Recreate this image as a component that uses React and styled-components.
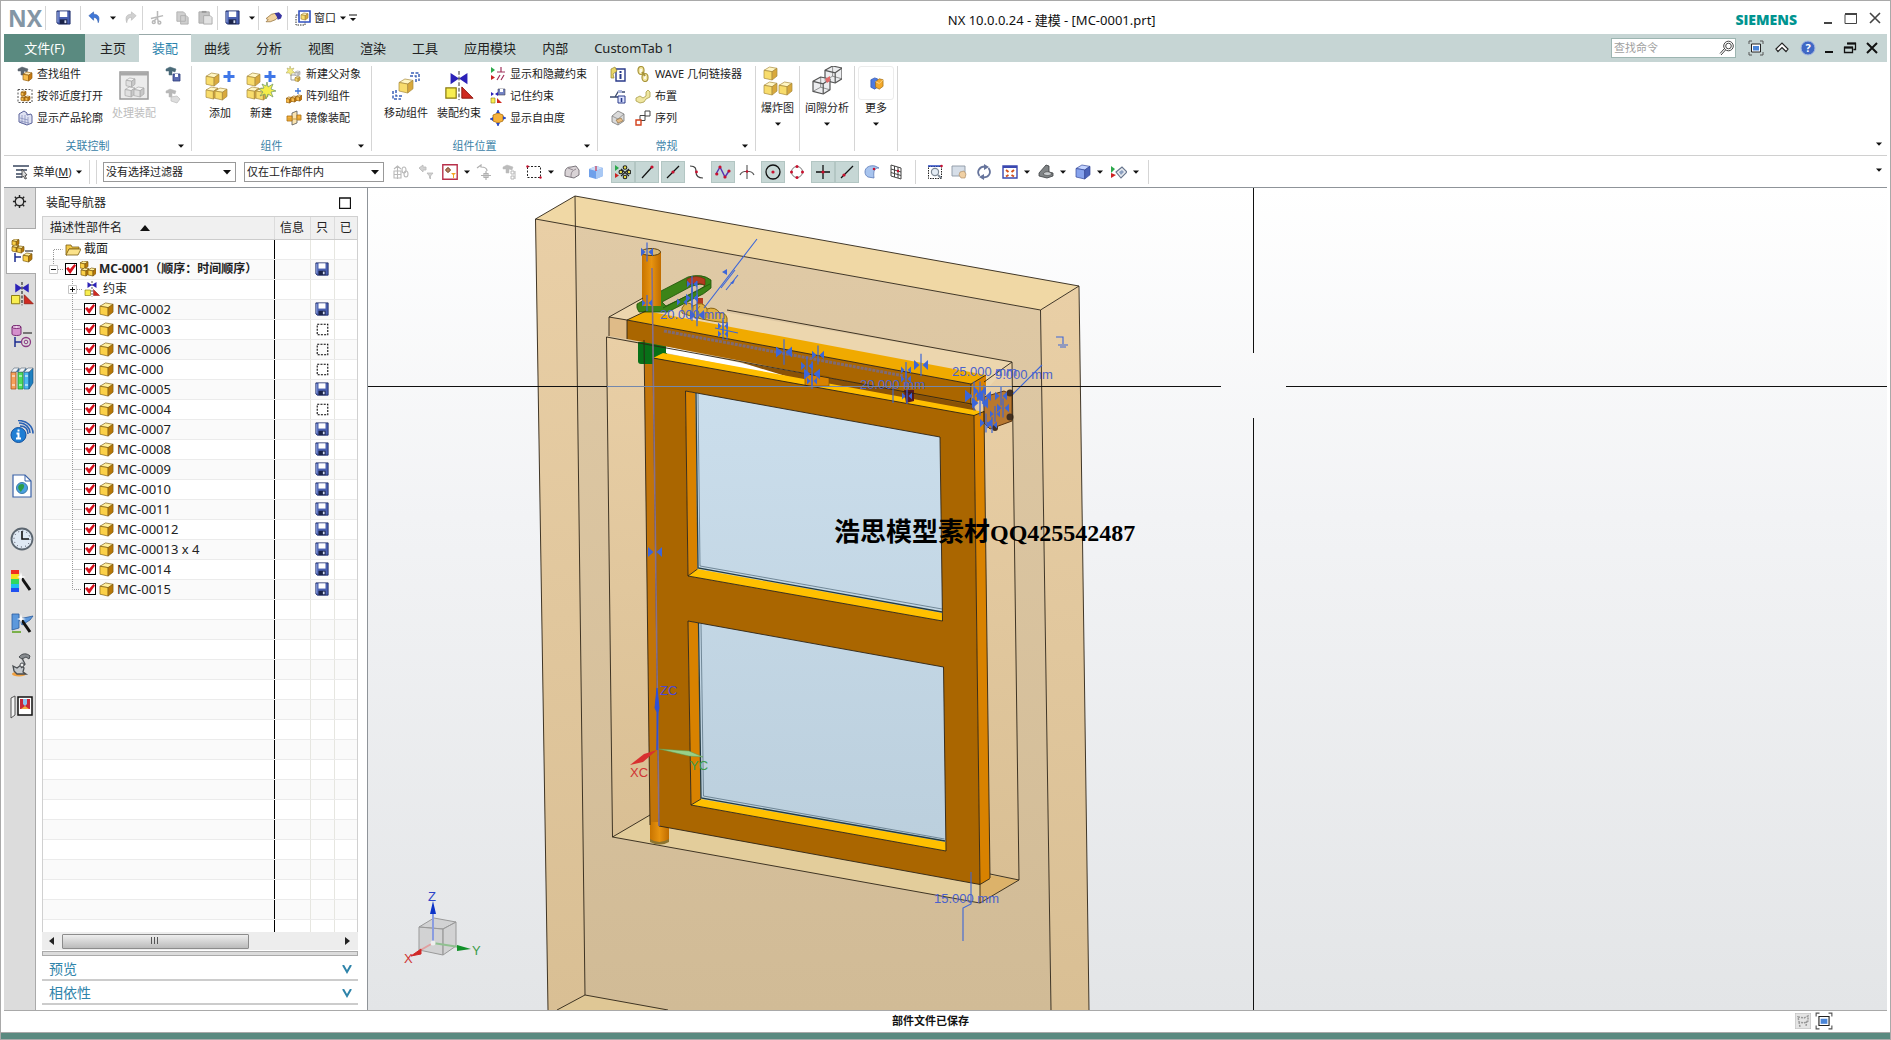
import React, { useState } from "react";
import styled, { createGlobalStyle, css } from "styled-components";

const GlobalStyle = createGlobalStyle`
  * { box-sizing: border-box; }
  body {
    margin: 0;
    background: #fff;
    color: #222;
    font-family: "Noto Sans", "Noto Sans CJK SC", sans-serif;
    font-size: 11px;
    line-height: 16px;
  }
  button, input, select { font: inherit; color: inherit; }
  button { padding: 0; border: 0; background: none; }
  svg { display: block; flex: none; }
`;

const StyledWindow = styled.div`
  display: flex;
  flex-direction: column;
  height: 100vh;
  padding: 0 3px;
  border: 1px solid #a9a9a9;
  border-bottom: 0;
`;

const StyledTitleBar = styled.header`
  display: flex;
  align-items: center;
  height: 33px;
  flex: none;
`;

const StyledLogo = styled.span`
  width: 41px;
  padding-left: 4px;
  color: #8496a5;
  font: bold 23px/30px "Open Sans", sans-serif;
`;

const StyledIconButton = styled.button`
  display: flex;
  align-items: center;
  justify-content: center;
  flex: none;
  width: ${(p) => p.$w || 24}px;
  height: 22px;
  margin-left: ${(p) => p.$before || 0}px;
  ${(p) =>
    p.$on &&
    css`
      background: #c6d7d5;
      border: 1px solid #b3c6c3;
    `}
`;

const StyledSeparator = styled.span`
  width: 1px;
  height: ${(p) => p.$h || 24}px;
  margin: 0 ${(p) => p.$gap || 0}px;
  background: #d5d5d5;
  flex: none;
`;

const StyledWindowTitle = styled.h1`
  flex: 1;
  margin: 0;
  padding: 4px 0 0 8px;
  text-align: center;
  font-size: 13px;
  font-weight: normal;
  line-height: 18px;
  color: #111;
`;

const StyledBrand = styled.span`
  padding-top: 4px;
  margin-right: 20px;
  color: #009490;
  font: 800 14px/18px "Open Sans", sans-serif;
`;

const StyledTabBar = styled.nav`
  display: flex;
  align-items: stretch;
  height: 28px;
  flex: none;
  background: #c6d5d4;
`;

const StyledTab = styled.button`
  padding: 0 13px 2px;
  font-size: 13px;
  line-height: 20px;
  color: ${(p) => (p.$active ? "#2b83ad" : "#222")};
  background: ${(p) => (p.$active ? "#fff" : "transparent")};
  border-top: 1px solid ${(p) => (p.$active ? "#9aa" : "transparent")};
`;

const StyledFileTab = styled(StyledTab)`
  width: 81px;
  margin-right: 2px;
  color: #fff;
  background: #5a8a80;
`;

const StyledTabTools = styled.div`
  display: flex;
  align-items: center;
  margin-left: auto;
  padding-right: 5px;
`;

const StyledSearch = styled.label`
  display: flex;
  align-items: center;
  width: 125px;
  height: 20px;
  margin-right: 8px;
  background: #fff;
  border: 1px solid #9db5b1;

  input {
    flex: 1;
    min-width: 0;
    padding: 0 2px;
    border: 0;
    outline: 0;
    background: none;
  }
  input::placeholder { color: #a0a0a0; }
`;

const StyledRibbon = styled.section`
  display: flex;
  height: 94px;
  flex: none;
  padding: 4px 0;
  border-bottom: 1px solid #d0d0d0;
`;

const StyledGroup = styled.div`
  display: flex;
  flex-direction: column;
  justify-content: space-between;
  width: ${(p) => p.$w}px;
  height: 85px;
  border-right: 1px solid #d5d5d5;
`;

const StyledGroupBody = styled.div`
  display: flex;
  gap: 9px;
  padding-left: ${(p) => p.$pad}px;
  justify-content: ${(p) => (p.$pad ? "flex-start" : "center")};
`;

const StyledGroupLabel = styled.div`
  display: grid;
  grid-template-columns: 1fr 20px;
  align-items: center;
  justify-items: center;
  height: 16px;
  margin-bottom: -3px;
  color: #3a82a8;
`;

const StyledList = styled.div`
  display: flex;
  flex-direction: column;
  margin-top: -3px;
`;

const StyledListButton = styled.button`
  display: flex;
  align-items: center;
  gap: 4px;
  height: 22px;
  white-space: nowrap;
`;

const StyledBigButton = styled.button`
  display: flex;
  flex-direction: column;
  align-items: center;
  min-width: 32px;
  white-space: nowrap;
  color: ${(p) => (p.$off ? "#bdbdbd" : "#222")};

  > svg:first-child { margin: 0 0 4px; }
  > svg:last-child { margin-top: 5px; }
`;

const StyledMoreBox = styled.span`
  display: flex;
  align-items: center;
  justify-content: center;
  width: 36px;
  height: 34px;
  border: 1px solid #ececec;
  border-radius: 3px;
`;

const StyledCorner = styled.div`
  display: flex;
  align-items: flex-end;
  margin-left: auto;
  padding: 0 5px 4px 0;
`;

const StyledToolbar = styled.section`
  display: flex;
  align-items: center;
  height: 32px;
  flex: none;
  border-bottom: 1px solid #8f9499;
`;

const StyledMenuButton = styled.button`
  display: flex;
  align-items: center;
  gap: 4px;
  width: 76px;
  margin-left: 9px;
`;

const StyledSelectBox = styled.label`
  display: grid;
  align-items: center;
  width: ${(p) => p.$w}px;
  margin-right: ${(p) => p.$after}px;

  > * { grid-area: 1 / 1; }
  svg { justify-self: end; margin-right: 5px; pointer-events: none; }
  select {
    appearance: none;
    width: 100%;
    height: 20px;
    padding: 0 2px;
    border: 1px solid #999;
    border-radius: 0;
    background: #fff;
  }
`;

const StyledMain = styled.main`
  display: flex;
  flex: 1;
  min-height: 0;
`;

const StyledSideBar = styled.nav`
  display: flex;
  flex-direction: column;
  align-items: flex-end;
  width: 32px;
  background: #dcdcdc;
  border-right: 1px solid #aaa;
`;

const StyledSideButton = styled.button`
  display: flex;
  align-items: center;
  justify-content: center;
  width: ${(p) => p.$w || 29}px;
  height: ${(p) => p.$h || 42}px;
  margin: 0 -1px ${(p) => p.$after || 0}px 0;
  ${(p) =>
    p.$active &&
    css`
      width: 30px;
      background: #fff;
      border: 1px solid #aaa;
      border-right: 0;
    `}
`;

const StyledPanel = styled.aside`
  display: flex;
  flex-direction: column;
  width: 332px;
  padding: 0 9px 5px 6px;
  border-right: 1px solid #8f9499;
`;

const StyledPanelHead = styled.div`
  display: flex;
  align-items: center;
  justify-content: space-between;
  height: 28px;
  padding: 2px 7px 0 4px;
  font-size: 12px;
`;

const StyledTreeFrame = styled.div`
  flex: 1;
  min-height: 0;
  overflow: hidden;
  border: 1px solid #d0d0d0;
  border-bottom: 0;
`;

const StyledTree = styled.table`
  width: 100%;
  table-layout: fixed;
  border-collapse: collapse;
  font-size: 12px;

  th {
    height: 22px;
    padding: 0;
    font-weight: normal;
    background: #f0f0f0;
    border-right: 1px solid #dcdcdc;
    border-bottom: 1px solid #ccc;
  }
  th:first-child { text-align: left; padding-left: 7px; }
  th svg { display: inline-block; margin-left: 18px; vertical-align: 1px; }
  td {
    height: 20px;
    padding: 0;
    border-right: 1px solid #e6e6e0;
    border-bottom: 1px solid #ebebeb;
  }
  td:first-child { border-right: 1px solid #000; }
  td:last-child, th:last-child { border-right: 0; }
  td > svg { margin: 0 auto; }
  tr:nth-child(even) td { background: #fafafa; }
`;

const StyledNode = styled.label`
  display: flex;
  align-items: center;
  height: 19px;
  padding-left: ${(p) => p.$indent}px;
  font-size: ${(p) => (p.$part ? 13 : 12)}px;
  font-weight: ${(p) => (p.$bold ? "bold" : "normal")};
  white-space: nowrap;

  span { padding-left: 3px; }
`;

const StyledCheck = styled.input`
  appearance: none;
  display: grid;
  flex: none;
  width: 12px;
  height: 12px;
  margin: 0 3px 0 0;
  border: 1px solid #000;
  background: #fff;

  &:checked::before {
    content: "";
    background: #d8101c;
    clip-path: polygon(0 45%, 22% 30%, 40% 50%, 85% 0, 100% 15%, 42% 100%);
  }
`;

const StyledScroll = styled.div`
  display: flex;
  align-items: center;
  height: 18px;
  flex: none;
  padding: 0 8px 0 7px;
  background: #ededed;
`;

const StyledThumb = styled.div`
  display: flex;
  align-items: center;
  justify-content: center;
  width: 62%;
  height: 15px;
  margin: 0 auto 0 8px;
  border: 1px solid #8c8c8c;
  border-radius: 1px;
  background: linear-gradient(#eee, #bbb);
`;

const StyledSplitter = styled.div`
  height: 5px;
  flex: none;
  margin: 1px 0;
  background: #dcdcdc;
  border: 1px solid #aaa;
`;

const StyledFold = styled.button`
  display: flex;
  align-items: center;
  justify-content: space-between;
  height: 24px;
  flex: none;
  padding: 2px 6px 0 7px;
  border-bottom: 2px solid #ccc;
  font-size: 14px;
  color: #2f84aa;
`;

const StyledViewport = styled.section`
  flex: 1;
  min-width: 0;
  overflow: hidden;
  background: linear-gradient(#fff, #f2f3f5 40%, #e3e5e7);

  svg { width: 100%; height: 100%; }
`;

const StyledStatus = styled.footer`
  display: flex;
  align-items: center;
  gap: 4px;
  height: 22px;
  flex: none;
  padding: 0 54px 2px 66px;
  border-top: 1px solid #a9a9a9;

  strong { flex: 1; text-align: center; color: #111; }
`;

const StyledBottomEdge = styled.div`
  height: 8px;
  flex: none;
  margin: 0 -3px;
  border-top: 1px solid #a9a9a9;
  border-bottom: 1px solid #a9a9a9;
  background: #5a8a80;
`;

/* ---------- icon drawings ---------- */

const Svg = ({ s = 16, v = 16, children }) => (
  <svg width={s} height={s} viewBox={`0 0 ${v} ${v}`} fill="none" aria-hidden="true">
    {children}
  </svg>
);

const YELLOW = ["#fff6c4", "#f8dc6c", "#d9a93c", "#a8893c"];
const GOLD = ["#fff0a0", "#fbd048", "#b87808", "#7d5a10"];
const GREY = ["#f4f4f4", "#e0e0e0", "#c8c8c8", "#a8a8a8"];
const BLUE = ["#c4d4ff", "#86a2ec", "#4b63b8", "#34489a"];
const ORANGE = ["#ffe8b0", "#f7bc4c", "#c97a10", "#96600f"];

const Cube = ({ x = 0, y = 0, s = 10, c = YELLOW }) => {
  const pt = (a, b) => `${(x + a * s).toFixed(1)} ${(y + b * s).toFixed(1)}`;
  return (
    <g stroke={c[3]} strokeWidth="0.7" strokeLinejoin="round">
      <path d={`M${pt(0, 0.25)}L${pt(0.42, 0)}L${pt(1, 0.1)}L${pt(0.62, 0.36)}z`} fill={c[0]} />
      <path d={`M${pt(0, 0.25)}L${pt(0.62, 0.36)}L${pt(0.62, 1)}L${pt(0, 0.86)}z`} fill={c[1]} />
      <path d={`M${pt(0.62, 0.36)}L${pt(1, 0.1)}L${pt(1, 0.7)}L${pt(0.62, 1)}z`} fill={c[2]} />
    </g>
  );
};

const Wire = ({ x, y, s }) => {
  const pt = (a, b) => `${(x + a * s).toFixed(1)} ${(y + b * s).toFixed(1)}`;
  return (
    <g stroke="#555" strokeWidth="1.2" strokeLinejoin="round">
      <path
        d={`M${pt(0, 0.25)}L${pt(0.45, 0)}L${pt(1, 0.12)}L${pt(1, 0.75)}L${pt(0.6, 1)}L${pt(0, 0.85)}z`}
        fill="#e4e6e8"
        fillOpacity="0.7"
      />
      <path d={`M${pt(0, 0.25)}L${pt(0.6, 0.4)}L${pt(1, 0.12)}M${pt(0.6, 0.4)}L${pt(0.6, 1)}`} />
      <path d={`M${pt(0, 0.85)}L${pt(0.45, 0.6)}L${pt(1, 0.75)}M${pt(0.45, 0.6)}L${pt(0.45, 0)}`} strokeWidth="0.6" />
    </g>
  );
};

const Dot = ({ x, y, r = 1.6 }) => <circle cx={x} cy={y} r={r} fill="#c8102e" />;

const Binocular = ({ c = "#5c6670" }) => (
  <path d="M1 3l4-2 6 2-1 3-3-1v4H4V5L1 5z" fill={c} stroke={c} strokeWidth="0.5" />
);

const Disk = ({ s = 14 }) => (
  <Svg s={s}>
    <path d="M1 1h14v14H2.500L1 13.500z" fill="#4a60b0" stroke="#1e2c68" />
    <path d="M4 1.500h8v6H4z" fill="#fff" />
    <path d="M4 10h8v5H4z" fill="#1a2348" />
    <path d="M9 11h2v3H9z" fill="#d4dcf4" />
    <path d="M2 2v11" stroke="#9db0ea" />
  </Svg>
);

const Arrow = ({ s = 6 }) => (
  <svg width={s} height={s} viewBox="0 0 6 6" aria-hidden="true">
    <path d="M0 1.500h6L3 4.800z" fill="#111" />
  </svg>
);

const Mate = ({ thin }) => (
  <>
    <path d="M7 2l9 6-9 6zM25 2l-9 6 9 6z" fill="#2c22b8" />
    <path d="M16 0v31" stroke="#222" strokeWidth={thin ? 1.5 : 1} strokeDasharray="4 2" />
    <path d="M2 18h11v11H2z" fill="#f8ee50" stroke="#8a7a10" strokeWidth="1.300" />
    <path d="M19 17v12h12z" fill="#cf2a20" stroke="#8c150e" />
  </>
);

const icons = {
  undo: <path d="M2 6l5-4v2.500c5 0 7 3 5 9-.8-4-2-5.500-5-5.500v3z" fill="#3f77d8" stroke="#2354a8" strokeWidth="0.600" />,
  redo: <path d="M14 6L9 2v2.500c-5 0-7 3-5 9 .8-4 2-5.500 5-5.500v3z" fill="#d0d0d0" stroke="#b0b0b0" strokeWidth="0.600" />,
  cut: (
    <g stroke="#b8b8b8" strokeWidth="1.600">
      <path d="M8 1v8M1 9l13-3M7 9l-3 3M8 9l1 4" />
      <circle cx="4" cy="13" r="1.500" />
      <circle cx="10" cy="13.500" r="1.500" />
    </g>
  ),
  copy: <path d="M2 2h7l2 2v8H2zM6 6h6l2 2v7H6z" fill="#cfcfcf" stroke="#b0b0b0" />,
  paste: (
    <>
      <path d="M1 2h11v12H1z" fill="#c4c4c4" stroke="#aaa" />
      <path d="M4 1h5v2H4z" fill="#999" />
      <path d="M6 6h7l2 2v7H6z" fill="#e2e2e2" stroke="#aaa" />
    </>
  ),
  hand: (
    <>
      <path d="M1 9l5-4 4-1 3 3-3 3-5 2-4 0 2-2z" fill="#f2d3a0" stroke="#91703c" strokeWidth="0.700" />
      <path d="M9 4l4-1 3 3-1 3-3 1-1-3z" fill="#3934a0" />
    </>
  ),
  windows: (
    <>
      <path d="M1 5h9v10H1z" stroke="#333" strokeDasharray="1.500 1" />
      <path d="M4 1h11v11H4z" fill="#fff" stroke="#3050c0" strokeWidth="1.600" />
      <Cube x={6} y={3} s={7} />
    </>
  ),
  find: (
    <>
      <Binocular />
      <Cube x={6} y={6} s={9} c={ORANGE} />
    </>
  ),
  near: (
    <>
      <path d="M1 1.500h14v13H1z" stroke="#555" strokeDasharray="2 1.500" />
      <Cube x={4} y={3} s={5} c={ORANGE} />
      <Cube x={4} y={8} s={5} c={ORANGE} />
      <Cube x={8} y={8} s={5} c={ORANGE} />
    </>
  ),
  outline: (
    <>
      <path d="M2 4l5-3 3 2v2l4-1 1 2v7l-5 2-8-3z" fill="#dfe2f2" stroke="#5a629a" />
      <path d="M5 5v9M8 5v9M11 7v8M3 8l8 2M3 11l9 2" stroke="#8088b8" strokeWidth="0.700" />
    </>
  ),
  bSave: (
    <>
      <Binocular c="#4a6a78" />
      <path d="M8 8h7v7H8z" fill="#5a6ab0" stroke="#2c3a78" strokeWidth="0.800" />
      <path d="M10 8h3v3h-3z" fill="#fff" />
    </>
  ),
  bOff: (
    <>
      <Binocular c="#b8b8b8" />
      <path d="M6 9l6-1 3 3-3 4-6-2z" fill="#ddd" stroke="#bbb" strokeWidth="0.700" />
    </>
  ),
  parent: (
    <>
      <path d="M4 0l1 3 3-1-1.500 2.500L9 7 6 7 5 10 3.500 7 0 7l2-2.500L1 2l2.500 1z" fill="#f3ea82" stroke="#a8a25a" strokeWidth="0.500" />
      <path d="M5 9v5h5M5 9h5" stroke="#999" />
      <Cube x={9} y={5} s={5} c={GREY} />
      <Cube x={9} y={10.5} s={5} />
    </>
  ),
  array: (
    <>
      <path d="M12 0v6M9 3h6" stroke="#3f77d8" strokeWidth="1.300" />
      <Cube x={0} y={9} s={6} c={ORANGE} />
      <Cube x={5} y={8} s={6} c={ORANGE} />
      <Cube x={10} y={7} s={6} c={ORANGE} />
    </>
  ),
  mirror: (
    <>
      <path d="M6 3l5-2v12l-5 2z" fill="#fbe4b0" stroke="#555" strokeWidth="0.800" />
      <path d="M1 6h5v5H1zM11 5h4v5h-4z" fill="#f7b23c" stroke="#a86c10" strokeWidth="0.800" />
      <path d="M1 9h14" stroke="#c93" />
    </>
  ),
  showCon: (
    <>
      <path d="M1 1l4 3-4 3z" fill="#2ba84a" />
      <path d="M1 9l4 2.500L1 14z" fill="#c22" />
      <path d="M7 6h8M11 1v5M7 14l3-5M11 14l3-5" stroke="#a0305a" strokeWidth="1.200" />
    </>
  ),
  keepCon: (
    <>
      <path d="M8 1h7v6H8z" fill="#7484c4" stroke="#445" strokeWidth="0.600" />
      <path d="M10 1h3v3h-3z" fill="#fff" />
      <path d="M1 4l3 2-3 2zM8 4L5 6l3 2z" fill="#2c22b8" />
      <path d="M1 10h4v5H1z" fill="#f8ee50" stroke="#8a7a10" strokeWidth="0.600" />
      <path d="M7 10l5 5H7z" fill="#cf2a20" />
    </>
  ),
  dof: (
    <>
      <path d="M8 0v16M0 9l16-1" stroke="#2a48c0" strokeWidth="1.200" />
      <path d="M3 5l5-2 5 2v6l-5 2-5-2z" fill="#f7b23c" stroke="#a86c10" strokeWidth="0.800" />
      <path d="M8 0L6 3h4zM8 16l-2-3h4zM0 9l3-2v4zM16 8l-3-2v4z" fill="#2a48c0" />
    </>
  ),
  linkInfo: (
    <>
      <path d="M6 3h9v12H6z" fill="#fff" stroke="#2a3a8a" strokeWidth="1.400" />
      <path d="M10.500 5v2M10.500 8v5" stroke="#2a3a8a" strokeWidth="2" />
      <path d="M1 3l4-2 2 4-4 3 1 4-3 0z" fill="#ead768" stroke="#948430" strokeWidth="0.700" />
    </>
  ),
  tree: (
    <>
      <path d="M0 9h5M5 9l3-5h7M5 9h10" stroke="#3a4a70" strokeWidth="1.300" />
      <path d="M8 2h4v3H8z" fill="#aab4d8" />
      <path d="M8 8h7v7H8z" fill="#dde4ff" stroke="#2a3a8a" />
      <path d="M11.500 10v4" stroke="#2a3a8a" strokeWidth="1.600" />
    </>
  ),
  brick: (
    <>
      <path d="M2 6l6-5 6 3v7l-6 4-6-3z" fill="#dadada" stroke="#777" strokeWidth="0.800" />
      <path d="M2 6l6 3 6-5M8 9v6" stroke="#888" strokeWidth="0.800" />
      <path d="M6 10l5-2 2 3-5 2z" fill="#e6bd88" stroke="#8a6a3a" strokeWidth="0.600" />
    </>
  ),
  chain: (
    <g stroke="#a8943a" strokeWidth="1.200">
      <ellipse cx="6" cy="4.500" rx="3" ry="4" fill="#f3e6a0" />
      <ellipse cx="10" cy="11.500" rx="3" ry="4" fill="#f3e6a0" />
      <path d="M6 3v4M10 9v4" stroke="#fff" strokeWidth="1.500" />
      <path d="M7 6l3 4" strokeWidth="2" />
    </g>
  ),
  arrange: <path d="M1 10l4-2 3 2 3-2V4l2-2 2 2v5l-4 2-2 3-4 1-4-2z" fill="#efe6a0" stroke="#a89c48" strokeWidth="0.800" />,
  sequence: (
    <>
      <path d="M10 1h5v5h-5z" stroke="#444" />
      <path d="M5 5.500h5v5H5z" stroke="#444" />
      <path d="M1 10h5v5H1z" stroke="#d3401c" strokeWidth="1.400" fill="#fff" />
    </>
  ),
  more: (
    <>
      <path d="M2 4l4-2 3 1v9l-3 2-4-2z" fill="#4d7ae0" stroke="#2a50a8" strokeWidth="0.700" />
      <path d="M7 6l4-3 4 1v7l-4 3-4-2z" fill="#f3a92c" stroke="#9c6a10" strokeWidth="0.700" />
      <path d="M7 6l4 2 4-4" stroke="#ffe0a0" strokeWidth="0.800" />
    </>
  ),
  menu: (
    <>
      <path d="M0 2h16M3 6h11M3 10h8M3 13h6" stroke="#6a7486" strokeWidth="1.800" />
      <path d="M9 5l5 6-2 .5 1.500 3-1.500.5-1.500-3-1.500 1.500z" fill="#ddd" stroke="#333" strokeWidth="0.800" />
    </>
  ),
  t1: (
    <g stroke="#b9b9b9" strokeWidth="1.100">
      <path d="M1 7h7v7H1zM4.500 2v13M1 5l3.500-3L8 5M1 10.500h7" />
      <ellipse cx="11" cy="6" rx="2" ry="3" />
      <ellipse cx="13" cy="10" rx="2" ry="3" />
    </g>
  ),
  t2: <path d="M1 4l4-3v2h3v3H5v2zM9 9h6l-2.500 3v3l-1-1v-2z" fill="#d2d2d2" stroke="#b8b8b8" strokeWidth="0.800" />,
  snap: (
    <>
      <path d="M0.800 0.800h14.400v14.400H0.800z" fill="#fff" stroke="#b8304a" strokeWidth="1.400" />
      <path d="M6 3v6M3 6h6" stroke="#a0522a" />
      <circle cx="6" cy="6" r="2" stroke="#7a4a2a" />
      <path d="M9 9h5l-2 2v3h-1v-3z" fill="#f5a623" />
    </>
  ),
  t4: <path d="M1 4l4-3v2c4 0 6 1 6 4M10 7v9M5 11.500h10M8 9.500h4v4H8z" stroke="#b0b0b0" strokeWidth="1.200" />,
  t5: (
    <>
      <Binocular c="#bbb" />
      <path d="M9 7h3v3H9zM9 12h3v3H9zM13 7v8" stroke="#b8b8b8" />
    </>
  ),
  marquee: (
    <>
      <path d="M1.500 2.500h13v11h-13z" stroke="#222" strokeDasharray="2 1.500" />
      <Dot x={1.5} y={2.5} r={1.2} />
      <Dot x={14.5} y={13.5} r={1.2} />
    </>
  ),
  greyBox: (
    <>
      <path d="M1 9c0-5 3-6 6-6l5-1 3 4v5l-5 3-9-2z" fill="#d9d3d6" stroke="#6f6a70" strokeWidth="0.900" />
      <path d="M7 13c0-5 1-6 5-8M4 4l5 2" stroke="#8a8088" strokeWidth="0.900" />
    </>
  ),
  blueCube: (
    <>
      <path d="M1 5l7-3 7 2v8l-7 3-7-2z" fill="#6fa0ea" />
      <path d="M1 5l7 2 7-3-7-2z" fill="#c8dcf8" />
      <path d="M8 7v8l7-3V4z" fill="#a8c8f4" />
      <path d="M8 7V2" stroke="#c8102e" />
    </>
  ),
  dots: (
    <>
      <path d="M0 1l4 3-4 3z" fill="#2ba84a" />
      <path d="M0 9l4 2.500L0 14z" fill="#c22" />
      <g fill="#e8dc4a" stroke="#222" strokeWidth="1.100">
        <path d="M6 5l8 7M14 5l-8 7" />
        <circle cx="10" cy="3.500" r="1.800" />
        <circle cx="10" cy="13" r="1.800" />
        <circle cx="5.800" cy="8" r="1.800" />
        <circle cx="14" cy="8" r="1.800" />
      </g>
    </>
  ),
  lineEnd: (
    <>
      <path d="M3 14L13 3" stroke="#111" strokeWidth="1.200" />
      <Dot x={13} y={3} />
    </>
  ),
  lineMid: (
    <>
      <path d="M2 14L14 2" stroke="#111" strokeWidth="1.200" />
      <Dot x={8} y={8} />
    </>
  ),
  curve: (
    <>
      <path d="M1 2c6 0 6 3 6 6s1 6 7 6" stroke="#444" strokeWidth="1.200" />
      <Dot x={7.5} y={8} r={1.4} />
    </>
  ),
  poly: (
    <>
      <path d="M1 10L5 3l5 10 4-6" stroke="#5a35b0" strokeWidth="1.500" />
      <Dot x={1.8} y={10} />
      <Dot x={5} y={3} />
      <Dot x={10} y={13} />
      <Dot x={14} y={7} />
    </>
  ),
  cross: (
    <>
      <path d="M8 1v14M1 11c2-5 12-5 14 0" stroke="#555" strokeWidth="1.100" />
      <Dot x={8} y={7.5} r={1.3} />
    </>
  ),
  center: (
    <>
      <circle cx="8" cy="8" r="7" stroke="#111" strokeWidth="1.300" />
      <Dot x={8} y={8} />
    </>
  ),
  quad: (
    <>
      <circle cx="8" cy="8" r="5.500" stroke="#777" />
      <Dot x={8} y={2.5} r={1.5} />
      <Dot x={8} y={13.5} r={1.5} />
      <Dot x={2.5} y={8} r={1.5} />
      <Dot x={13.5} y={8} r={1.5} />
    </>
  ),
  plus: (
    <>
      <path d="M8 1v14M1 8h14" stroke="#111" strokeWidth="1.300" />
      <Dot x={8} y={8} />
    </>
  ),
  onLine: (
    <>
      <path d="M2 14L14 2" stroke="#111" strokeWidth="1.200" />
      <Dot x={5} y={11} />
    </>
  ),
  surface: (
    <>
      <path d="M1 8c0-5 5-7 10-6l4 2c-4 0-6 2-5 10l-6-1c-2-1-3-3-3-5z" fill="#a8c4ee" stroke="#5a7ab8" strokeWidth="0.800" />
      <Dot x={10} y={5} r={1.3} />
    </>
  ),
  grid: (
    <>
      <path d="M3 1l10 3v11L3 12zM3 5l10 3M3 8.500l10 3M6.500 2v11M10 3v11" stroke="#444" strokeWidth="1" />
      <Dot x={10} y={7} r={1.2} />
    </>
  ),
  fit: (
    <>
      <path d="M1.500 2.500h13v12h-13z" stroke="#222" strokeDasharray="1.500 1" />
      <path d="M1 2h14" stroke="#2a48c0" strokeWidth="1.500" />
      <circle cx="8" cy="8" r="3.600" fill="#e4ecf4" stroke="#7c8894" strokeWidth="1.200" />
      <path d="M11 11l3 3" stroke="#7c8894" strokeWidth="1.800" />
      <Dot x={14.5} y={2} r={1.3} />
    </>
  ),
  pan: (
    <>
      <path d="M1 2h13v10H1z" fill="#d6dee8" stroke="#8c96a4" strokeWidth="0.900" />
      <path d="M9 8l4-1 2 3-1 4-4 0-2-3z" fill="#f0d0a4" stroke="#a8845a" strokeWidth="0.600" />
    </>
  ),
  rotate: (
    <>
      <path d="M3.500 12C0 7 4 2.500 9 2.500M12.500 4c3.500 5 0 9.500-5 9.500" stroke="#66749c" strokeWidth="1.800" />
      <path d="M8 0l5 3-5 3zM8 10l-5 3 5 3z" fill="#66749c" />
    </>
  ),
  windowFit: (
    <>
      <path d="M1 2h14v12H1z" fill="#fff" stroke="#3a48b0" strokeWidth="1.400" />
      <path d="M1 3h14" stroke="#3a48b0" strokeWidth="2" />
      <path d="M4 6l2.500 2M12 6L9.500 8M4 12.500L6.500 11M12 12.500L9.500 11" stroke="#d3501c" strokeWidth="2" />
    </>
  ),
  section: (
    <>
      <path d="M1 9l7-8 3 1v6l4 1v3l-6 2-8-2z" fill="#808486" stroke="#3a3e40" strokeWidth="0.800" />
      <path d="M5 10c2-3 6-3 9 0-3 2-6 2-9 0z" fill="#c8ccce" stroke="#444" strokeWidth="0.600" />
    </>
  ),
  shaded: <Cube x={1} y={1} s={14} c={BLUE} />,
  flip: (
    <>
      <path d="M0 2l4 3-4 4z" fill="#2ba84a" />
      <path d="M0 9l5 2-5 3z" fill="#c22" />
      <path d="M5 8l6-5 5 5-6 6z" fill="#e6eaf0" stroke="#66748c" strokeWidth="1.100" />
      <path d="M8 8l3-2 2 2-3 3z" fill="#8ca0c0" />
    </>
  ),
  magnifier: (
    <g stroke="#444">
      <circle cx="9.500" cy="6" r="4.800" />
      <circle cx="9.500" cy="6" r="2.800" />
      <path d="M6.500 10L2 15M5 9l-4 4.500" />
    </g>
  ),
  full: (
    <>
      <path d="M1 4V1h3M12 1h3v3M15 12v3h-3M4 15H1v-3" stroke="#555" />
      <path d="M3.500 4h9v8h-9z" fill="#fff" stroke="#222" />
      <path d="M5 6h6v4.500H5z" fill="#4b86d8" />
    </>
  ),
  collapse: <path d="M2 9l6-6 6 6-2 2.500L8 7.500l-4 4z" fill="#fff" stroke="#222" strokeWidth="1.200" />,
  help: <circle cx="8" cy="8" r="7" fill="#4168c4" stroke="#a6b8e0" />,
  flag: (
    <>
      <path d="M0 0h16v16H0z" fill="#e4e4e4" stroke="#bbb" />
      <path d="M3 4l6 1 4-2v5l-4 2-5-1zM4 9l1 5M12 8l-1 5" stroke="#999" strokeDasharray="2 1" strokeWidth="1.500" />
    </>
  ),
};

const Ico = ({ n, s = 16 }) => <Svg s={s}>{icons[n]}</Svg>;

const BigIcon = {
  process: (
    <Svg s={30} v={30}>
      <path d="M1 1h28v27H1z" fill="#ececec" stroke="#9a9a9a" strokeWidth="1.500" />
      <path d="M1 3h28" stroke="#a8a8a8" strokeWidth="3" />
      <Cube x={7} y={7} s={9} c={GREY} />
      <Cube x={6} y={16} s={10} c={GREY} />
      <Cube x={15} y={16} s={10} c={GREY} />
    </Svg>
  ),
  add: (
    <Svg s={30} v={30}>
      <Cube x={1} y={2} s={13} />
      <Cube x={1} y={16} s={12} />
      <Cube x={10} y={17} s={12} />
      <path d="M24 0v11M18.500 5.500h11" stroke="#3f77e8" strokeWidth="3" />
    </Svg>
  ),
  create: (
    <Svg s={30} v={30}>
      <Cube x={1} y={2} s={13} />
      <Cube x={1} y={16} s={12} />
      <Cube x={10} y={17} s={12} />
      <path d="M24 0v11M18.500 5.500h11" stroke="#3f77e8" strokeWidth="3" />
      <path d="M21 11l1 5 5-3-2 5 5 2-5 1 2 5-5-3-2 5-1-5-5 2 3-4-4-3 5-1-2-4 4 2z" fill="#f5ee4a" stroke="#7aa06a" strokeWidth="0.800" />
    </Svg>
  ),
  move: (
    <Svg s={30} v={30}>
      <Cube x={8} y={8} s={14} />
      <path d="M20 2h8v8M19 5h6v6M2 20v8h8M5 19v6h6" stroke="#3a60b8" strokeWidth="1.500" strokeDasharray="3 1.500" />
    </Svg>
  ),
  constrain: (
    <Svg s={30} v={32}>
      <Mate />
    </Svg>
  ),
  explode: (
    <Svg s={30} v={30}>
      <Cube x={1} y={1} s={13} />
      <Cube x={1} y={16} s={13} />
      <Cube x={16} y={16} s={13} />
    </Svg>
  ),
  clearance: (
    <Svg s={30} v={30}>
      <Wire x={13} y={0} s={17} />
      <Wire x={1} y={11} s={17} />
      <path d="M13 13l5-3v5l-3 2z" fill="#e06a6a" />
    </Svg>
  ),
};

const Folder = () => (
  <Svg>
    <path d="M1 4h5l1 2h7v2H4l-2 6H1z" fill="#f2c84a" stroke="#7a5a10" strokeWidth="0.800" />
    <path d="M4 8h12l-3 6H1z" fill="#fbe28a" stroke="#7a5a10" strokeWidth="0.800" />
  </Svg>
);

const Missing = () => (
  <Svg s={13}>
    <path d="M1.500 1.500h13v13h-13z" stroke="#000" strokeWidth="1.300" strokeDasharray="2.500 1.500" />
  </Svg>
);

/* dotted guides in front of the tree nodes */
const Guide = ({ kind }) => (
  <svg width="17" height="20" viewBox="0 0 17 20" aria-hidden="true">
    <g stroke="#999" strokeDasharray="1 1" fill="none">
      {kind === "folder" && <path d="M5.500 20V10.500h9" />}
      {kind === "root" && <path d="M5.500 0v6M10 10.500h5" />}
      {kind === "group" && <path d="M5.500 0v20M10 10.500h5" />}
      {kind === "part" && <path d="M5.500 0v20M5.500 10.500h9" />}
      {kind === "last" && <path d="M5.500 0v10.500h9" />}
    </g>
    {(kind === "root" || kind === "group") && (
      <>
        <path d="M1.500 6.500h8v8h-8z" fill="#fff" stroke="#c4c4c4" />
        <path d={kind === "root" ? "M3 10.500h5" : "M3 10.500h5M5.500 8v5"} stroke="#111" />
      </>
    )}
  </svg>
);

/* ---------- page data ---------- */

const tabs = ["主页", "装配", "曲线", "分析", "视图", "渲染", "工具", "应用模块", "内部", "CustomTab 1"];

const snapTools = [
  ["t1", "移动", 5], ["t2", "重置", 1], ["snap", "捕捉点", 0], ["arrow"],
  ["t4", "定向", 0], ["t5", "查找", 2], ["marquee", "矩形选择", 0], ["arrow"],
  ["greyBox", "小平面", 4], ["blueCube", "高亮", 0],
  ["dots", "启用捕捉", 3, true], ["lineEnd", "端点", 0, true], ["lineMid", "中点", 2, true],
  ["curve", "控制点", 0], ["poly", "极点", 2, true], ["cross", "交点", 0],
  ["center", "圆弧中心", 2, true], ["quad", "象限点", 0], ["plus", "现有点", 2, true],
  ["onLine", "曲线上的点", 0, true], ["surface", "面上的点", 1], ["grid", "栅格点", 0],
  ["bar"],
  ["fit", "适合窗口", 0], ["pan", "平移", 0], ["rotate", "旋转", 1], ["windowFit", "定向视图", 2], ["arrow"],
  ["section", "剪切截面", 2], ["arrow"], ["shaded", "着色", 3], ["arrow"], ["flip", "显示和隐藏", 2], ["arrow"],
  ["bar"],
];

const parts = [
  ["MC-0002", true], ["MC-0003", false], ["MC-0006", false], ["MC-000", false], ["MC-0005", true],
  ["MC-0004", false], ["MC-0007", true], ["MC-0008", true], ["MC-0009", true], ["MC-0010", true],
  ["MC-0011", true], ["MC-00012", true], ["MC-00013 x 4", true], ["MC-0014", true], ["MC-0015", true],
];

/* ---------- sections ---------- */

function TitleBar() {
  return (
    <StyledTitleBar>
      <StyledLogo>NX</StyledLogo>
      <StyledSeparator />
      <StyledIconButton $w={34} aria-label="保存"><Disk s={15} /></StyledIconButton>
      <StyledSeparator />
      <StyledIconButton $w={27} aria-label="撤销"><Ico n="undo" s={15} /></StyledIconButton>
      <StyledIconButton $w={10} aria-label="撤销列表"><Arrow /></StyledIconButton>
      <StyledIconButton $w={24} aria-label="重做"><Ico n="redo" s={15} /></StyledIconButton>
      <StyledSeparator />
      <StyledIconButton $w={28} aria-label="剪切"><Ico n="cut" s={15} /></StyledIconButton>
      <StyledIconButton $w={22} aria-label="复制"><Ico n="copy" s={15} /></StyledIconButton>
      <StyledIconButton $w={24} aria-label="粘贴"><Ico n="paste" s={15} /></StyledIconButton>
      <StyledSeparator />
      <StyledIconButton $w={28} aria-label="另存为"><Disk s={15} /></StyledIconButton>
      <StyledIconButton $w={12} aria-label="保存选项"><Arrow /></StyledIconButton>
      <StyledSeparator />
      <StyledIconButton $w={28} aria-label="触控模式"><Ico n="hand" s={17} /></StyledIconButton>
      <StyledSeparator />
      <StyledIconButton as="span" $w={22} $before={4}><Ico n="windows" /></StyledIconButton>
      <StyledListButton>
        窗口 <Arrow />
      </StyledListButton>
      <StyledIconButton $w={14} aria-label="工具条选项">
        <svg width="8" height="8" viewBox="0 0 8 8"><path d="M0 .5h8v1H0zM1 4h6L4 7z" fill="#111" /></svg>
      </StyledIconButton>
      <StyledWindowTitle>NX 10.0.0.24 - 建模 - [MC-0001.prt]</StyledWindowTitle>
      <StyledBrand>SIEMENS</StyledBrand>
      <StyledIconButton $w={22} aria-label="最小化">
        <Svg><path d="M4 13h8" stroke="#444" strokeWidth="2" /></Svg>
      </StyledIconButton>
      <StyledIconButton $w={24} aria-label="最大化">
        <Svg><path d="M2 4.500h11.500v9H2z" stroke="#444" /><path d="M2 4h12" stroke="#444" strokeWidth="2" /></Svg>
      </StyledIconButton>
      <StyledIconButton $w={24} aria-label="关闭">
        <Svg><path d="M3 3l10 10M13 3L3 13" stroke="#444" strokeWidth="1.600" /></Svg>
      </StyledIconButton>
    </StyledTitleBar>
  );
}

function TabBar() {
  const [active, setActive] = useState("装配");
  return (
    <StyledTabBar>
      <StyledFileTab>文件(F)</StyledFileTab>
      {tabs.map((t) => (
        <StyledTab key={t} $active={t === active} onClick={() => setActive(t)}>{t}</StyledTab>
      ))}
      <StyledTabTools>
        <StyledSearch>
          <input placeholder="查找命令" aria-label="查找命令" />
          <Ico n="magnifier" />
        </StyledSearch>
        <StyledIconButton aria-label="全屏"><Ico n="full" /></StyledIconButton>
        <StyledIconButton $w={28} aria-label="最小化功能区"><Ico n="collapse" /></StyledIconButton>
        <StyledIconButton aria-label="帮助">
          <Svg>
            {icons.help}
            <text x="8" y="12" textAnchor="middle" fontSize="11" fontWeight="bold" fill="#fff">?</text>
          </Svg>
        </StyledIconButton>
        <StyledIconButton $w={18} aria-label="最小化部件">
          <Svg><path d="M4 12h8" stroke="#111" strokeWidth="2" /></Svg>
        </StyledIconButton>
        <StyledIconButton aria-label="还原部件">
          <Svg>
            <path d="M5.500 3.500h8v6h-2M2.500 7.500h8v5h-8z" stroke="#111" strokeWidth="1.300" />
            <path d="M5 3.500h9M2 7.500h9" stroke="#111" strokeWidth="2" />
          </Svg>
        </StyledIconButton>
        <StyledIconButton $w={20} aria-label="关闭部件">
          <Svg><path d="M3 3l10 10M13 3L3 13" stroke="#111" strokeWidth="2" /></Svg>
        </StyledIconButton>
      </StyledTabTools>
    </StyledTabBar>
  );
}

const ListItem = ({ icon, children }) => (
  <StyledListButton>
    <Ico n={icon} />
    {children}
  </StyledListButton>
);

const GroupLabel = ({ children }) => (
  <StyledGroupLabel>
    <span>{children}</span>
    <Arrow />
  </StyledGroupLabel>
);

function Ribbon() {
  return (
    <StyledRibbon>
      <StyledGroup $w={188}>
        <StyledGroupBody $pad={13}>
          <StyledList>
            <ListItem icon="find">查找组件</ListItem>
            <ListItem icon="near">按邻近度打开</ListItem>
            <ListItem icon="outline">显示产品轮廓</ListItem>
          </StyledList>
          <StyledBigButton $off disabled>{BigIcon.process}处理装配</StyledBigButton>
          <StyledList>
            <StyledListButton aria-label="查找并保存"><Ico n="bSave" /></StyledListButton>
            <StyledListButton aria-label="查找关联"><Ico n="bOff" /></StyledListButton>
          </StyledList>
        </StyledGroupBody>
        <GroupLabel>关联控制</GroupLabel>
      </StyledGroup>

      <StyledGroup $w={180}>
        <StyledGroupBody $pad={12}>
          <StyledBigButton>{BigIcon.add}添加</StyledBigButton>
          <StyledBigButton>{BigIcon.create}新建</StyledBigButton>
          <StyledList>
            <ListItem icon="parent">新建父对象</ListItem>
            <ListItem icon="array">阵列组件</ListItem>
            <ListItem icon="mirror">镜像装配</ListItem>
          </StyledList>
        </StyledGroupBody>
        <GroupLabel>组件</GroupLabel>
      </StyledGroup>

      <StyledGroup $w={226}>
        <StyledGroupBody $pad={12}>
          <StyledBigButton>{BigIcon.move}移动组件</StyledBigButton>
          <StyledBigButton>{BigIcon.constrain}装配约束</StyledBigButton>
          <StyledList>
            <ListItem icon="showCon">显示和隐藏约束</ListItem>
            <ListItem icon="keepCon">记住约束</ListItem>
            <ListItem icon="dof">显示自由度</ListItem>
          </StyledList>
        </StyledGroupBody>
        <GroupLabel>组件位置</GroupLabel>
      </StyledGroup>

      <StyledGroup $w={158}>
        <StyledGroupBody $pad={12}>
          <StyledList>
            <StyledListButton aria-label="关系信息"><Ico n="linkInfo" /></StyledListButton>
            <StyledListButton aria-label="关系浏览器"><Ico n="tree" /></StyledListButton>
            <StyledListButton aria-label="简化装配"><Ico n="brick" /></StyledListButton>
          </StyledList>
          <StyledList>
            <ListItem icon="chain">WAVE 几何链接器</ListItem>
            <ListItem icon="arrange">布置</ListItem>
            <ListItem icon="sequence">序列</ListItem>
          </StyledList>
        </StyledGroupBody>
        <GroupLabel>常规</GroupLabel>
      </StyledGroup>

      <StyledGroup $w={44}>
        <StyledGroupBody>
          <StyledBigButton>{BigIcon.explode}爆炸图<Arrow /></StyledBigButton>
        </StyledGroupBody>
      </StyledGroup>
      <StyledGroup $w={55}>
        <StyledGroupBody>
          <StyledBigButton>{BigIcon.clearance}间隙分析<Arrow /></StyledBigButton>
        </StyledGroupBody>
      </StyledGroup>
      <StyledGroup $w={43}>
        <StyledGroupBody>
          <StyledBigButton>
            <StyledMoreBox><Ico n="more" s={15} /></StyledMoreBox>
            更多
            <Arrow />
          </StyledBigButton>
        </StyledGroupBody>
      </StyledGroup>
      <StyledCorner><Arrow /></StyledCorner>
    </StyledRibbon>
  );
}

function Toolbar() {
  return (
    <StyledToolbar>
      <StyledMenuButton>
        <Ico n="menu" />
        <span>菜单(<u>M</u>)</span>
        <Arrow />
      </StyledMenuButton>
      <StyledSeparator />
      <StyledSeparator $gap={6} $h={0} />
      <StyledSelectBox $w={133} $after={8}>
        <select aria-label="类型过滤器"><option>没有选择过滤器</option></select>
        <Arrow s={8} />
      </StyledSelectBox>
      <StyledSelectBox $w={140} $after={0}>
        <select aria-label="选择范围"><option>仅在工作部件内</option></select>
        <Arrow s={8} />
      </StyledSelectBox>
      {snapTools.map(([n, label, before, on], i) => {
        if (n === "bar") return <StyledSeparator key={i} $gap={7} />;
        if (n === "arrow")
          return <StyledIconButton key={i} $w={10} aria-label="更多选项"><Arrow /></StyledIconButton>;
        return (
          <StyledIconButton key={i} $before={before} $on={on} aria-label={label}>
            <Ico n={n} />
          </StyledIconButton>
        );
      })}
      <StyledCorner>
        <Arrow />
      </StyledCorner>
    </StyledToolbar>
  );
}

function SideBar() {
  return (
    <StyledSideBar>
      <StyledSideButton $h={26} $w={33} aria-label="资源条选项">
        <Svg s={15}>
          <circle cx="8" cy="8" r="4.500" stroke="#222" strokeWidth="1.400" />
          <path d="M8 1v2.500M8 12.500V15M1 8h2.500M12.500 8H15M3 3l2 2M11 11l2 2M13 3l-2 2M5 11l-2 2" stroke="#222" strokeWidth="1.500" />
        </Svg>
      </StyledSideButton>
      <StyledSideButton $h={14} as="span" />
      <StyledSideButton $h={46} $active aria-label="装配导航器">
        <Svg s={24} v={24}>
          <Cube x={2} y={0} s={7} c={GOLD} />
          <Cube x={2} y={6} s={7} c={GOLD} />
          <Cube x={7} y={7} s={7} c={GOLD} />
          <path d="M15 12h8" stroke="#111" />
          <path d="M5 14v9M5 18h6" stroke="#1c2c90" strokeWidth="1.500" />
          <Cube x={13} y={14} s={9} c={GOLD} />
        </Svg>
      </StyledSideButton>
      <StyledSideButton $h={40} aria-label="约束导航器">
        <Svg s={24} v={32}><Mate thin /></Svg>
      </StyledSideButton>
      <StyledSideButton $h={44} aria-label="部件导航器">
        <Svg s={24} v={24}>
          <path d="M2 3c0-2 9-2 9 0v7c0 2-9 2-9 0z" fill="#d590cc" stroke="#7a2c74" />
          <ellipse cx="6.500" cy="3" rx="4.500" ry="1.500" fill="#f2d2ee" stroke="#7a2c74" />
          <path d="M13 9h9" stroke="#111" />
          <path d="M5 13v10M5 18h6" stroke="#1c2c90" strokeWidth="1.500" />
          <circle cx="16" cy="18" r="4.500" stroke="#8c3c84" strokeWidth="1.300" />
          <circle cx="16" cy="18" r="1.800" stroke="#8c3c84" />
        </Svg>
      </StyledSideButton>
      <StyledSideButton $h={42} aria-label="重用库">
        <Svg s={24} v={24}>
          <path d="M1 5h5v17H1z" fill="#f5a05a" stroke="#9c4c10" strokeWidth="0.700" />
          <path d="M8 5h5v17H8z" fill="#4cdc5c" stroke="#188028" strokeWidth="0.700" />
          <path d="M14 5h5v17h-5z" fill="#4cb8f0" stroke="#1468a0" strokeWidth="0.700" />
          <path d="M6 5l3-4v4M13 5l3-4v4M19 5l4-4v15l-4 6z" fill="#1f80c0" stroke="#124c7c" strokeWidth="0.600" />
          <path d="M1 5l3-4h5L6 5zM8 5l3-4h5l-3 4zM14 5l4-4h5l-4 4z" fill="#f0f4f8" stroke="#567" strokeWidth="0.600" />
          <path d="M2 9h3M9 9h3M15 9h3M2 18h3M9 18h3M15 18h3" stroke="#fff" strokeWidth="1.200" />
        </Svg>
      </StyledSideButton>
      <StyledSideButton $h={64} aria-label="HD3D 工具">
        <Svg s={24} v={24}>
          <path d="M10 6c5 0 8 3 8 8M9 3c7 0 11 5 11 10M8 0.500c9 0 15 6 15 13" stroke="#2a62b4" strokeWidth="1.600" />
          <circle cx="8.500" cy="15" r="7.500" fill="#1f7ed4" stroke="#14509c" />
          <path d="M8.500 9.500v2M6.500 13.500h2v5M6 18.500h5" stroke="#fff" strokeWidth="2" />
        </Svg>
      </StyledSideButton>
      <StyledSideButton $h={44} $after={10} aria-label="Web 浏览器">
        <Svg s={24} v={24}>
          <path d="M3 1h12l6 6v16H3z" fill="#fff" stroke="#3a62a8" strokeWidth="1.200" />
          <path d="M15 1v6h6" stroke="#3a62a8" />
          <circle cx="12" cy="14" r="5.500" fill="#4aa0e0" stroke="#3a7aa8" />
          <path d="M9 11c3-2 6-1 5 2s-2 2-3 5c-2-2-4-4-2-7z" fill="#2c9c48" />
        </Svg>
      </StyledSideButton>
      <StyledSideButton aria-label="历史记录">
        <Svg s={24} v={24}>
          <circle cx="12" cy="12" r="10.500" fill="#dfe9f4" stroke="#5c6670" strokeWidth="1.800" />
          <path d="M12 4v8h7" stroke="#111" strokeWidth="1.600" />
          <circle cx="12" cy="12" r="8" stroke="#445" strokeDasharray="1 3.200" />
        </Svg>
      </StyledSideButton>
      <StyledSideButton aria-label="系统材料">
        <Svg s={24} v={24}>
          <path d="M1 1h8v4H1z" fill="#f03020" />
          <path d="M1 5h8v5H1z" fill="#f8e020" />
          <path d="M1 10h8v5H1z" fill="#30d860" />
          <path d="M1 15h8v4H1z" fill="#20c0f0" />
          <path d="M1 19h8v4H1z" fill="#2050f0" />
          <path d="M11 8l9 13" stroke="#111" strokeWidth="3" />
          <path d="M11 3l1 4 4 1-4 1-1 4-1-4-3-1 3-1z" fill="#fff" />
        </Svg>
      </StyledSideButton>
      <StyledSideButton aria-label="加工向导">
        <Svg s={24} v={24}>
          <path d="M2 3h7v14l-7 2zM9 8l14-3-3 4-8 5z" fill="#5c98dc" stroke="#2a5ca0" strokeWidth="0.800" />
          <path d="M2 21h9" stroke="#7ab04a" strokeWidth="2" />
          <path d="M11 8l9 13" stroke="#111" strokeWidth="3" />
          <path d="M11 3l1 4 4 1-4 1-1 4-1-4-3-1 3-1z" fill="#fff" />
        </Svg>
      </StyledSideButton>
      <StyledSideButton aria-label="机器人">
        <Svg s={24} v={24}>
          <ellipse cx="9" cy="21" rx="7" ry="2.500" fill="#f0a040" />
          <path d="M9 4c3-4 8-4 11-1l-1 3-3-2-4 2z" fill="#888c90" stroke="#4a4e52" />
          <path d="M12 5l3 6-4 4M3 13l4 2 4-3 3 3-1 4 3 2H7l-3-3z" fill="#c4c8cc" stroke="#4a4e52" strokeWidth="1.300" />
          <circle cx="12" cy="12" r="2" fill="#eee" stroke="#4a4e52" />
        </Svg>
      </StyledSideButton>
      <StyledSideButton aria-label="角色">
        <Svg s={24} v={24}>
          <path d="M1 3l4-2v19l-4 3z" fill="#f4f4f4" stroke="#555" />
          <path d="M8 2h14v18H8z" fill="#fff" stroke="#111" strokeWidth="1.500" />
          <path d="M10 4h10v10H10z" fill="#c82838" />
          <path d="M13 4h4v5l-2 2-2-2z" fill="#8cc4f0" />
          <path d="M11 14l4-3 4 3z" fill="#f4b040" />
        </Svg>
      </StyledSideButton>
    </StyledSideBar>
  );
}

const Check = () => <StyledCheck type="checkbox" defaultChecked />;

function Navigator() {
  return (
    <StyledPanel>
      <StyledPanelHead>
        装配导航器
        <svg width="12" height="12" viewBox="0 0 12 12"><path d="M.5 1v10.500h11V1zM0 1h12" stroke="#111" strokeWidth="1.300" fill="none" /></svg>
      </StyledPanelHead>
      <StyledTreeFrame>
        <StyledTree>
          <colgroup>
            <col />
            <col width="36" />
            <col width="24" />
            <col width="23" />
          </colgroup>
          <thead>
            <tr>
              <th>
                描述性部件名
                <svg width="10" height="6" viewBox="0 0 10 6"><path d="M0 6h10L5 0z" fill="#111" /></svg>
              </th>
              <th>信息</th>
              <th>只</th>
              <th>已</th>
            </tr>
          </thead>
          <tbody>
            <tr>
              <td><StyledNode as="div" $indent={5}><Guide kind="folder" /><Folder /><span>截面</span></StyledNode></td>
              <td /><td /><td />
            </tr>
            <tr>
              <td>
                <StyledNode $indent={5} $bold>
                  <Guide kind="root" />
                  <Check />
                  <Svg>
                    <Cube x={0} y={0} s={8} c={GOLD} />
                    <Cube x={1} y={7} s={8} c={GOLD} />
                    <Cube x={8} y={7} s={8} c={GOLD} />
                  </Svg>
                  <span>MC-0001（顺序：时间顺序）</span>
                </StyledNode>
              </td>
              <td /><td><Disk /></td><td />
            </tr>
            <tr>
              <td>
                <StyledNode as="div" $indent={24}>
                  <Guide kind="group" />
                  <Svg v={32}><Mate thin /></Svg>
                  <span>约束</span>
                </StyledNode>
              </td>
              <td /><td /><td />
            </tr>
            {parts.map(([name, loaded], i) => (
              <tr key={name}>
                <td>
                  <StyledNode $indent={24} $part>
                    <Guide kind={i === parts.length - 1 ? "last" : "part"} />
                    <Check />
                    <Svg s={15}><Cube x={1} y={1} s={14} c={GOLD} /></Svg>
                    <span>{name}</span>
                  </StyledNode>
                </td>
                <td />
                <td>{loaded ? <Disk /> : <Missing />}</td>
                <td />
              </tr>
            ))}
            {Array.from({ length: 17 }, (_, i) => (
              <tr key={i}><td /><td /><td /><td /></tr>
            ))}
          </tbody>
        </StyledTree>
      </StyledTreeFrame>
      <StyledScroll>
        <svg width="5" height="8" viewBox="0 0 5 8"><path d="M5 0v8L0 4z" fill="#222" /></svg>
        <StyledThumb>
          <svg width="8" height="8" viewBox="0 0 8 8"><path d="M.5 0v7M3.500 0v7M6.500 0v7" stroke="#555" /></svg>
        </StyledThumb>
        <svg width="5" height="8" viewBox="0 0 5 8"><path d="M0 0v8l5-4z" fill="#222" /></svg>
      </StyledScroll>
      <StyledSplitter />
      {["预览", "相依性"].map((t) => (
        <StyledFold key={t}>
          {t}
          <svg width="10" height="9" viewBox="0 0 10 9"><path d="M1 0l4 7 4-7" stroke="#2f84aa" strokeWidth="2" fill="none" /></svg>
        </StyledFold>
      ))}
    </StyledPanel>
  );
}

/* constraint marker: two arrow heads facing a short bar */
const Bow = ({ x, y, s = 7, bar = true }) => (
  <g fill="#3c66d8">
    <path d={`M${x - s} ${y - s * 0.7}l${s - 1.5} ${s * 0.7}l${1.5 - s} ${s * 0.7}z`} />
    <path d={`M${x + s} ${y - s * 0.7}l${1.5 - s} ${s * 0.7}l${s - 1.5} ${s * 0.7}z`} />
    {bar && <path d={`M${x} ${y - s * 1.6}v${s * 3.2}`} stroke="#3c66d8" strokeWidth="1.2" />}
  </g>
);

const StyledDim = styled.text`
  font-family: "Liberation Sans", sans-serif;
  font-size: 13px;
  fill: ${(p) => p.$c || "#4a62cc"};
`;

const StyledMark = styled.text`
  font-family: "Liberation Serif", "Noto Sans CJK SC", serif;
  font-size: 26px;
  font-weight: bold;
  fill: #000;

  tspan { font-size: 24px; }
`;

function Viewport() {
  return (
    <StyledViewport>
      <svg viewBox="368 188 1519 822" preserveAspectRatio="xMinYMin slice" fill="none">
        <defs>
          <linearGradient id="wall" x1="0" y1="0" x2="0" y2="1">
            <stop offset="0" stopColor="#e0caa6" />
            <stop offset="1" stopColor="#d1bb96" />
          </linearGradient>
          <linearGradient id="side" x1="0" y1="0" x2="0" y2="1">
            <stop offset="0" stopColor="#e9cfa6" />
            <stop offset="1" stopColor="#d9bf94" />
          </linearGradient>
          <linearGradient id="glass" x1="0" y1="391" x2="0" y2="850" gradientUnits="userSpaceOnUse">
            <stop offset="0" stopColor="#cbdeec" />
            <stop offset="1" stopColor="#bbcfdd" />
          </linearGradient>
          <linearGradient id="post" x1="0" y1="0" x2="1" y2="0">
            <stop offset="0" stopColor="#c87400" />
            <stop offset="0.500" stopColor="#e89410" />
            <stop offset="1" stopColor="#c06c00" />
          </linearGradient>
        </defs>

        {/* wall */}
        <path d="M535.500 219L1040.500 310 1051 1010H548z" fill="url(#wall)" />
        <path d="M535.500 219L575 226 585 995 557 1010H548z" fill="url(#side)" />
        <path d="M585 995L557 1010H668z" fill="#dfc795" />
        <path d="M535.500 219L575 196 1079 286 1040.500 310z" fill="#f0d8a5" />
        <path d="M1040.500 310L1079 286 1089 1010H1051z" fill="url(#side)" />

        {/* opening */}
        <path d="M606.500 337L644 344 650 815 612.500 837z" fill="url(#side)" />
        <path d="M975 400L1012 362 1019 880 989 875z" fill="url(#side)" />
        <path d="M612.500 837L650 815 989 874 1019 880 980 903z" fill="#e3cd9b" />
        <path d="M980 885L990 875 1019 880 980 903z" fill="#dcb26a" />
        <path d="M609 317L643 298 1012 362 984 392z" fill="#ecd6ae" />
        <path d="M643 298L727 310 640 306z" fill="#e0caa6" />
        <path d="M609 317l18 3v19l-18-3z" fill="#dfbb88" />

        {/* post behind the rail */}
        <path d="M644 340h11l4 490h-9z" fill="#c27408" />
        <path d="M650 822h19v18q-9 6-19 0z" fill="url(#post)" />
        <path d="M650 839q9 6 19 0v3q-9 5-19 0z" fill="#8c7430" />

        {/* bracket */}
        <path d="M638 342h29v18l-14 4h-12q-3 0-3-3z" fill="#087018" />

        {/* gaps under the rail */}
        <path d="M666 346l106 24 33 9v2l-139-28z" fill="#fff" />
        <path d="M829 376l26 4 48 18-74-15z" fill="#fff" />
        <path d="M740 362l231 41 6 9-172-30z" fill="#8a5206" />

        {/* sash */}
        <path d="M653 358l10-5 321 59-10 4z" fill="#ffbe00" />
        <path d="M653 358l321 57.500 6 469L659 826z" fill="#aa6600" />
        <path d="M974 415.500l10-4 6 467-10 6z" fill="#d88200" />

        {/* panes */}
        <path d="M685.500 391L940 437l2.500 184L688 576z" fill="url(#glass)" />
        <path d="M685.500 391l10 2 2 176-9.500 7z" fill="#d88200" />
        <path d="M688 576l9.500-7 245 44v8z" fill="#ffc000" />
        <path d="M688 621l255.500 46L946 851 691 805z" fill="url(#glass)" />
        <path d="M688 621l10 2 3 176-10 6z" fill="#d88200" />
        <path d="M691 805l10-6 245 43v9z" fill="#ffc000" />
        <path d="M696 393l2 175 244 44M698.500 623l2.500 175 244 43" stroke="#243c44" strokeWidth="1.300" />
        <path d="M698 394l2 172 242 43M701 624l2.500 172 241 43" stroke="#5c7484" strokeWidth="0.800" />

        {/* rail */}
        <path d="M627 320l19-9 340 64-15 9z" fill="#f0aa00" />
        <path d="M627 320l344 64v21L627 339z" fill="#aa6600" />
        <path d="M971 384l15-9v20l-13 10z" fill="#d98200" />
        <path d="M664 331l240 45" stroke="#7f6a74" strokeWidth="3" strokeDasharray="3 1" />

        {/* arm, pin and post top */}
        <path d="M642 252h19v60h-19z" fill="url(#post)" />
        <ellipse cx="651" cy="252" rx="9.500" ry="3.500" fill="#d8b878" stroke="#5a4010" />
        <path d="M637 304l24-13 27-14q14-4 23 3v8q-6 6-18 11l-25 13h-29q-3-4-2-8z" fill="#3c8418" stroke="#1d5008" strokeWidth="0.800" />
        <path d="M662 302l28-15q12-5 15-1l-8 5-31 15z" fill="#dac4a0" stroke="#1d5008" strokeWidth="0.800" />
        <path d="M663 308l33-17 14-7" stroke="#1d5008" strokeWidth="0.700" />
        <path d="M687 279q9-5 18 0v6q-9-4-18 1z" fill="#b23c20" stroke="#7a2010" strokeWidth="0.600" />
        <path d="M697 298h6v10h-6z" fill="#b23c20" />
        <path d="M642 270h19v36h-19z" fill="url(#post)" />
        <path d="M682 308q5-9 11-2 10-6 14 3 8-3 13 4 5-1 7 5v5q-28-3-45-10z" fill="#e0b040" stroke="#8a6414" />
        <path d="M693 306v10M707 309v9M700 306q-5 5-2 9" stroke="#8a6414" strokeWidth="0.800" />
        <path d="M805 372l24 5v9h-24z" fill="#d98200" stroke="#7a4a00" strokeWidth="0.600" />
        <path d="M984 397l20-6 8 4v26l-22 8-6-6z" fill="#b87830" stroke="#5a3410" />
        <circle cx="1010" cy="393" r="3.500" fill="#443020" />
        <circle cx="1010" cy="417" r="3.500" fill="#443020" />
        <circle cx="995" cy="428" r="3" fill="#443020" />
        <path d="M904 390h10v11l-8 2z" fill="#5a1a20" />

        {/* edges */}
        <g stroke="#2c2416" strokeWidth="0.900">
          <path d="M535.500 219L575 196 1079 286 1040.500 310zM535.500 219L548 1010M575 196L585 995M1079 286l10 724M1040.500 310L1051 1010M557 1010l28-15 83 15" />
          <path d="M606.500 337l6 500 367.500 66 39-23L1012 362M612.500 837L650 815M990 874l29 6M980 885v18M609 317l34-19M727 310l285 52-28 20M609 317v19M606.500 337l365 67M609 317l18 3" />
          <path d="M627 339v-19l19-9M627 320l344 64 15-9M971 384v21M653 358l321 57.500 10-4M653 358l6 468 321 58.500 10-6M974 415.500l6 469M644 340l6 485M984 411l6 467" />
          <path d="M685.500 391L940 437l2.500 184L688 576zM688 621l255.500 46L946 851 691 805zM688 576l9.500-7M691 805l10-6" />
        </g>

        {/* constraint graphics */}
        <g stroke="#3c66d8" strokeWidth="1.100">
          <path d="M757 239L704 308M1042 365l-29 29M692 283v38M697 281v40M723 320v20M727 322v18M893 385v18M715 328l23 5" />
          <path d="M971 872v32l-8 4v33M1056 337h7v7M1058 345h10M1060 347h6M735 270l-14 18M738 275l-12 15" />
        </g>
        <path d="M652 268L659 826" stroke="#86708c" strokeWidth="1.600" />
        <Bow x={647} y={252} s={6} />
        <Bow x={647} y={303} s={5} />
        <Bow x={692} y={284} s={5} />
        <Bow x={692} y={298} s={6} />
        <Bow x={682} y={302} s={5} bar={false} />
        <Bow x={697} y={315} s={7} />
        <Bow x={723} y={326} s={5} />
        <Bow x={723} y={334} s={5} bar={false} />
        <path d="M722 272l5-3v6zM735 280l-5 3 3 1z" fill="#3c66d8" />
        <Bow x={784} y={352} s={8} />
        <Bow x={818} y={355} s={6} />
        <Bow x={807} y={366} s={6} />
        <Bow x={812} y={374} s={8} />
        <Bow x={812} y={381} s={5} />
        <Bow x={921} y={365} s={7} />
        <Bow x={906} y={370} s={5} />
        <Bow x={906} y={379} s={5} />
        <Bow x={907} y={396} s={5} />
        <Bow x={974} y={396} s={9} />
        <Bow x={980} y={403} s={8} />
        <Bow x={984} y={396} s={7} />
        <Bow x={980} y={391} s={6} />
        <Bow x={1001} y={396} s={6} />
        <Bow x={1003} y={408} s={6} />
        <Bow x={995} y={414} s={5} />
        <Bow x={986} y={423} s={6} />
        <Bow x={992} y={425} s={5} />
        <Bow x={655} y={552} s={7} bar={false} />

        <StyledDim x="660" y="319">20.000 mm</StyledDim>
        <StyledDim x="860" y="389">20.000 mm</StyledDim>
        <StyledDim x="952" y="376">25.000 mm</StyledDim>
        <StyledDim x="995" y="379">9.000 mm</StyledDim>
        <StyledDim x="934" y="903">15.000 mm</StyledDim>

        {/* work coordinate system */}
        <path d="M657 750v-38l-2-4 2-20 2 20-1 4z" fill="#2c50d8" stroke="#2c50d8" />
        <path d="M657 750l-13 4-14 11 13-3z" fill="#d83030" />
        <path d="M659 749l30 2 14 6-14-1z" fill="#98d088" stroke="#5a9c50" strokeWidth="0.500" />
        <StyledDim x="660" y="695" $c="#4a46d8">ZC</StyledDim>
        <StyledDim x="630" y="777" $c="#d03434">XC</StyledDim>
        <StyledDim x="690" y="770" $c="#3c9c4c">YC</StyledDim>

        {/* view triad */}
        <g stroke="#999" fill="#c4c4c4" fillOpacity="0.600">
          <path d="M419 927l15-9 22 4-13 7z" />
          <path d="M419 927l24 2v26l-24-5z" />
          <path d="M443 929l13-7v24l-13 9z" />
        </g>
        <path d="M433 943v-30" stroke="#8a9ce0" strokeWidth="2" />
        <path d="M433 901l-3 13h6z" fill="#0c34c8" />
        <path d="M433 943l-14 8" stroke="#e0a0a0" strokeWidth="2" />
        <path d="M411 956l10-7 0 5z" fill="#d02828" stroke="#d02828" />
        <path d="M433 943l26 4" stroke="#90c090" strokeWidth="2" />
        <path d="M471 949l-14-4v6z" fill="#109028" />
        <circle cx="433" cy="943" r="2.500" fill="#eee" />
        <StyledDim x="428" y="901" $c="#2c44c8">Z</StyledDim>
        <StyledDim x="404" y="963" $c="#d03434">X</StyledDim>
        <StyledDim x="472" y="955" $c="#3c9c4c">Y</StyledDim>

        {/* cross hair */}
        <path d="M368 386.500H607M1012 386.500h209M1286 386.500h601M1253.500 188v165M1253.500 418v592" stroke="#111" />
        <path d="M607 386.500h405" stroke="#7488ac" />
        <StyledMark x="834" y="541">浩思模型素材<tspan>QQ425542487</tspan></StyledMark>
      </svg>
    </StyledViewport>
  );
}

export default function App() {
  return (
    <>
      <GlobalStyle />
      <StyledWindow>
        <TitleBar />
        <TabBar />
        <Ribbon />
        <Toolbar />
        <StyledMain>
          <SideBar />
          <Navigator />
          <Viewport />
        </StyledMain>
        <StyledStatus>
          <strong>部件文件已保存</strong>
          <Ico n="flag" />
          <Ico n="full" s={18} />
        </StyledStatus>
        <StyledBottomEdge />
      </StyledWindow>
    </>
  );
}
